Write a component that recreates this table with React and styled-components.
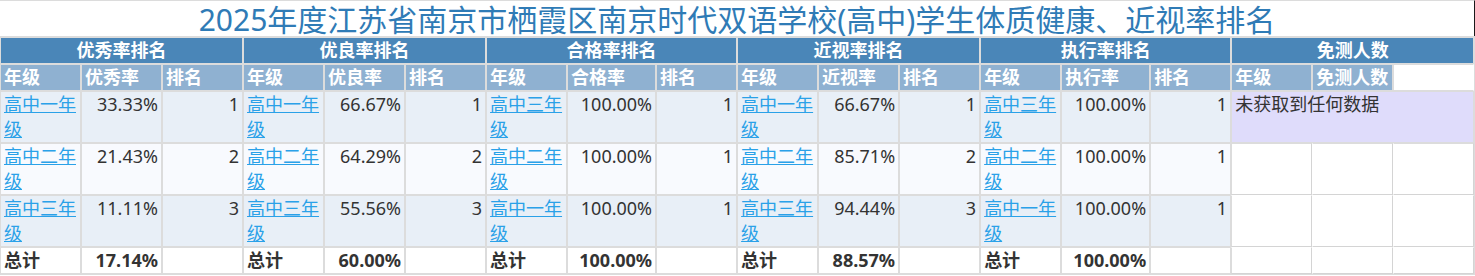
import React from 'react';
import styled, { createGlobalStyle } from 'styled-components';

const GlobalStyle = createGlobalStyle`
  body {
    margin: 0;
    background: #fff;
    font-family: "Noto Sans", "Noto Sans CJK SC", sans-serif;
  }
`;

const GRAY = '#dcdcdc';
const LINE = '#d4d4d4';

const Title = styled.div`
  height: 35px;
  border-top: 1px solid ${GRAY};
  border-right: 1px solid #1a1a1a;
  text-align: center;
  font-size: 30px;
  line-height: 37px;
  color: #2f7bb6;
  white-space: nowrap;
`;

const Grid = styled.table`
  width: 1475px;
  table-layout: fixed;
  border-collapse: separate;
  border-spacing: 0;
  border-top: 1px solid ${GRAY};
  border-right: 1px solid ${GRAY};
  border-bottom: 1px solid ${GRAY};
  font-size: 18px;
`;

const GroupHead = styled.th`
  box-sizing: border-box;
  height: 27px;
  padding: 0 3px;
  border: 1px solid ${GRAY};
  background: #4a86b8;
  color: #fff;
  font-weight: bold;
  text-align: center;
  line-height: 25px;
`;

const SubHead = styled.th`
  box-sizing: border-box;
  height: 27px;
  padding: 0 3px;
  border: 1px solid ${GRAY};
  border-right-color: ${(p) => (p.$blank ? '#fff' : GRAY)};
  background: ${(p) => (p.$blank ? '#fff' : '#8fb1d1')};
  color: #fff;
  font-weight: bold;
  text-align: left;
  line-height: 25px;
  white-space: nowrap;
`;

const tones = {
  odd: '#e8eff7',
  even: '#f8fafe',
  total: '#fff',
};

const Cell = styled.td`
  box-sizing: border-box;
  height: ${(p) => (p.$tone === 'total' ? '27px' : '52px')};
  padding: ${(p) => (p.$tone === 'total' ? '0 3px' : '0 3px')};
  border: 1px solid ${GRAY};
  background: ${(p) => tones[p.$tone]};
  color: #333;
  font-weight: ${(p) => (p.$tone === 'total' ? 'bold' : 'normal')};
  text-align: ${(p) => p.$align || 'left'};
  vertical-align: top;
  line-height: 25px;
`;

const Notice = styled.td`
  box-sizing: border-box;
  padding: 0 3px;
  border: 1px solid ${GRAY};
  background: #dfdcfb;
  color: #333;
  vertical-align: top;
  line-height: 25px;
`;

const Blank = styled.td`
  box-sizing: border-box;
  border: 1px solid ${LINE};
  border-top-color: ${(p) => (p.$topGray ? GRAY : '#fff')};
  border-left-color: ${(p) => (p.$first ? GRAY : '#fff')};
  background: #fff;
`;

const GradeLink = styled.a`
  color: #2aa1e8;
  text-decoration: underline;
  cursor: pointer;
`;

const groups = [
  {
    title: '优秀率排名',
    rate: '优秀率',
    rows: [
      ['高中一年级', '33.33%', 1],
      ['高中二年级', '21.43%', 2],
      ['高中三年级', '11.11%', 3],
    ],
    total: '17.14%',
  },
  {
    title: '优良率排名',
    rate: '优良率',
    rows: [
      ['高中一年级', '66.67%', 1],
      ['高中二年级', '64.29%', 2],
      ['高中三年级', '55.56%', 3],
    ],
    total: '60.00%',
  },
  {
    title: '合格率排名',
    rate: '合格率',
    wide: true,
    rows: [
      ['高中三年级', '100.00%', 1],
      ['高中二年级', '100.00%', 1],
      ['高中一年级', '100.00%', 1],
    ],
    total: '100.00%',
  },
  {
    title: '近视率排名',
    rate: '近视率',
    rows: [
      ['高中一年级', '66.67%', 1],
      ['高中二年级', '85.71%', 2],
      ['高中三年级', '94.44%', 3],
    ],
    total: '88.57%',
  },
  {
    title: '执行率排名',
    rate: '执行率',
    wide: true,
    rows: [
      ['高中三年级', '100.00%', 1],
      ['高中二年级', '100.00%', 1],
      ['高中一年级', '100.00%', 1],
    ],
    total: '100.00%',
  },
];

const BlankRow = ({ topGray }) => (
  <>
    <Blank $first $topGray={topGray} />
    <Blank $topGray={topGray} />
    <Blank $topGray={topGray} />
  </>
);

const App = () => {
  const cols = [];
  groups.forEach((g) => {
    cols.push(81, g.wide ? 89 : 81, 81);
  });
  cols.push(81, 81, 81);

  return (
    <>
      <GlobalStyle />
      <Title>2025年度江苏省南京市栖霞区南京时代双语学校(高中)学生体质健康、近视率排名</Title>
      <Grid>
        <colgroup>
          {cols.map((w, i) => (
            <col key={i} style={{ width: w }} />
          ))}
        </colgroup>
        <thead>
          <tr>
            {groups.map((g) => (
              <GroupHead key={g.title} colSpan={3}>
                {g.title}
              </GroupHead>
            ))}
            <GroupHead colSpan={3}>免测人数</GroupHead>
          </tr>
          <tr>
            {groups.map((g) => (
              <React.Fragment key={g.title}>
                <SubHead>年级</SubHead>
                <SubHead>{g.rate}</SubHead>
                <SubHead>排名</SubHead>
              </React.Fragment>
            ))}
            <SubHead>年级</SubHead>
            <SubHead>免测人数</SubHead>
            <SubHead $blank />
          </tr>
        </thead>
        <tbody>
          {[0, 1, 2].map((r) => {
            const tone = r % 2 === 0 ? 'odd' : 'even';
            return (
              <tr key={r}>
                {groups.map((g) => {
                  const [grade, value, rank] = g.rows[r];
                  return (
                    <React.Fragment key={g.title}>
                      <Cell $tone={tone}>
                        <GradeLink>{grade}</GradeLink>
                      </Cell>
                      <Cell $tone={tone} $align="right">
                        {value}
                      </Cell>
                      <Cell $tone={tone} $align="right">
                        {rank}
                      </Cell>
                    </React.Fragment>
                  );
                })}
                {r === 0 ? (
                  <Notice colSpan={3}>未获取到任何数据</Notice>
                ) : (
                  <BlankRow topGray={r === 1} />
                )}
              </tr>
            );
          })}
          <tr>
            {groups.map((g) => (
              <React.Fragment key={g.title}>
                <Cell $tone="total">总计</Cell>
                <Cell $tone="total" $align="right">
                  {g.total}
                </Cell>
                <Cell $tone="total" />
              </React.Fragment>
            ))}
            <BlankRow />
          </tr>
        </tbody>
      </Grid>
    </>
  );
};

export default App;
